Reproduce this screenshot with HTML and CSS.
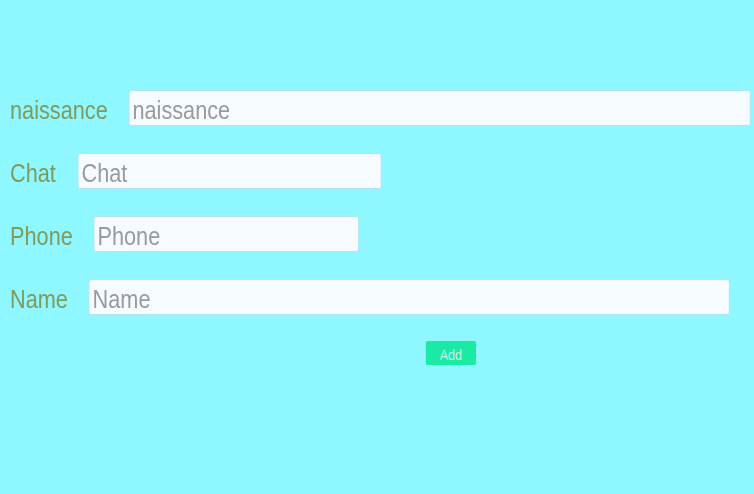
FILE: index.html
```html
<!DOCTYPE html>
<html>
<head>
<meta charset="utf-8">
<link rel="stylesheet" href="styles.css">
</head>
<body>
<form class="form">
  <div class="row">
    <label class="label">naissance</label>
    <input class="field field-naissance" placeholder="naissance">
  </div>
  <div class="row">
    <label class="label">Chat</label>
    <input class="field field-chat" placeholder="Chat">
  </div>
  <div class="row">
    <label class="label">Phone</label>
    <input class="field field-phone" placeholder="Phone">
  </div>
  <div class="row">
    <label class="label">Name</label>
    <input class="field field-name" placeholder="Name">
  </div>
  <div class="actions">
    <button type="button" class="add">Add</button>
  </div>
</form>
</body>
</html>
```
FILE: styles.css
```css
html, body {
  margin: 0;
  padding: 0;
  background: #8ff7ff;
  font-family: "Liberation Sans", Arial, sans-serif;
}
body {
  overflow: hidden;
}
/* the source UI is horizontally condensed */
.form {
  padding: 90px 0 0 12px;
  display: flex;
  flex-direction: column;
  gap: 27px;
  transform: scaleX(0.835);
  transform-origin: 0 0;
}
.row {
  display: flex;
  align-items: center;
  gap: 24.5px;
  height: 36px;
}
.label {
  font-size: 26px;
  line-height: 29px;
  color: #809a5c;
  white-space: nowrap;
  padding-top: 5px;
}
.field {
  flex: none;
  box-sizing: border-box;
  height: 36px;
  border: 1px solid #b2e3ec;
  border-radius: 3px;
  background: #f5fbff;
  font-family: "Liberation Sans", Arial, sans-serif;
  font-size: 26px;
  line-height: 29px;
  padding: 5px 4px 0;
  color: #555;
  outline: none;
}
.field::placeholder { color: #9a9a9a; }
.field-naissance { width: 745px; }
.field-chat { width: 364px; margin-left: 1.2px; }
.field-phone { width: 318.5px; }
.field-name { width: 768.5px; }
.actions {
  padding-left: 498px;
  margin-top: -1px;
}
.add {
  width: 60px;
  height: 24px;
  border: none;
  border-radius: 2px;
  background: #19eba2;
  color: #d2f5ea;
  font-family: "Liberation Sans", Arial, sans-serif;
  font-size: 15px;
  padding: 2px 0 0;
}
```
